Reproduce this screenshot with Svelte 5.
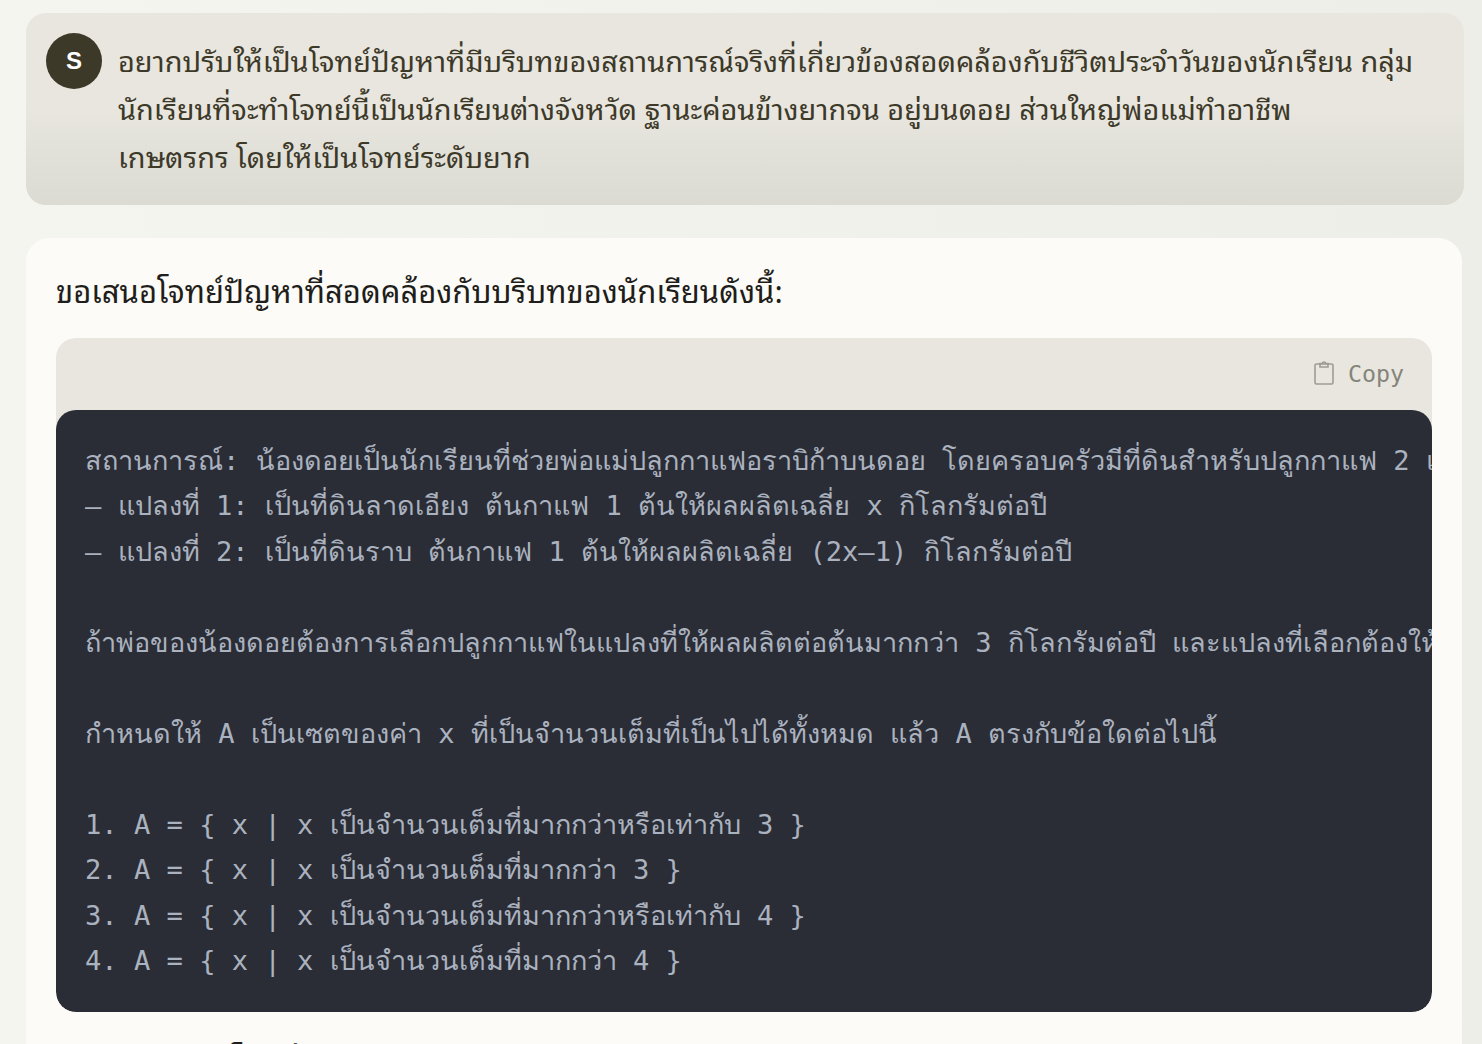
<script>
  const codeText = `สถานการณ์: น้องดอยเป็นนักเรียนที่ช่วยพ่อแม่ปลูกกาแฟอราบิก้าบนดอย โดยครอบครัวมีที่ดินสำหรับปลูกกาแฟ 2 แปลง ดังนี้
– แปลงที่ 1: เป็นที่ดินลาดเอียง ต้นกาแฟ 1 ต้นให้ผลผลิตเฉลี่ย x กิโลกรัมต่อปี
– แปลงที่ 2: เป็นที่ดินราบ ต้นกาแฟ 1 ต้นให้ผลผลิตเฉลี่ย (2x–1) กิโลกรัมต่อปี

ถ้าพ่อของน้องดอยต้องการเลือกปลูกกาแฟในแปลงที่ให้ผลผลิตต่อต้นมากกว่า 3 กิโลกรัมต่อปี และแปลงที่เลือกต้องให้ผลผลิตมากกว่าอีกแปลง

กำหนดให้ A เป็นเซตของค่า x ที่เป็นจำนวนเต็มที่เป็นไปได้ทั้งหมด แล้ว A ตรงกับข้อใดต่อไปนี้

1. A = { x | x เป็นจำนวนเต็มที่มากกว่าหรือเท่ากับ 3 }
2. A = { x | x เป็นจำนวนเต็มที่มากกว่า 3 }
3. A = { x | x เป็นจำนวนเต็มที่มากกว่าหรือเท่ากับ 4 }
4. A = { x | x เป็นจำนวนเต็มที่มากกว่า 4 }`;
</script>

<div class="page">
  <div class="user-msg">
    <div class="avatar">S</div>
    <p class="user-text">อยากปรับให้เป็นโจทย์ปัญหาที่มีบริบทของสถานการณ์จริงที่เกี่ยวข้องสอดคล้องกับชีวิตประจำวันของนักเรียน กลุ่ม<br />นักเรียนที่จะทำโจทย์นี้เป็นนักเรียนต่างจังหวัด ฐานะค่อนข้างยากจน อยู่บนดอย ส่วนใหญ่พ่อแม่ทำอาชีพ<br />เกษตรกร โดยให้เป็นโจทย์ระดับยาก</p>
  </div>

  <div class="reply">
    <p class="reply-text">ขอเสนอโจทย์ปัญหาที่สอดคล้องกับบริบทของนักเรียนดังนี้:</p>
    <div class="code-wrap">
      <div class="code-head">
        <button class="copy">
          <svg class="copy-icon" width="22" height="26" viewBox="0 0 22 26" fill="none" stroke="currentColor" stroke-width="1.6" aria-hidden="true">
            <rect x="2" y="4" width="18" height="20" rx="1.5" />
            <path d="M7 7V3.500h2.500a1.500 1.500 0 0 1 3 0H15V7z" />
          </svg>
          Copy
        </button>
      </div>
      <pre class="code"><code>{codeText}</code></pre>
    </div>
    <p class="reply-text next">คำอธิบายของโจทย์:</p>
  </div>
</div>

<style>
  :global(body) {
    margin: 0;
    background: #f3f3ed;
    overflow: hidden;
  }

  .page {
    height: 1044px;
    overflow: hidden;
    padding: 13px 18px 0 26px;
    box-sizing: border-box;
    background: linear-gradient(to right, #f5f5ef, #eeeee8);
    font-family: "Noto Sans Thai Looped", "Noto Sans", sans-serif;
  }

  .user-msg {
    display: flex;
    gap: 16px;
    height: 192px;
    box-sizing: border-box;
    padding: 20px 20px 0;
    border-radius: 20px;
    background: linear-gradient(to bottom, #e8e6de 0%, #e8e6de 50%, #dbdbd3 100%);
    color: #3d3929;
  }

  .avatar {
    flex: none;
    width: 56px;
    height: 56px;
    border-radius: 50%;
    background: #3d3929;
    color: #fff;
    font-family: "Liberation Sans", sans-serif;
    font-size: 24px;
    font-weight: 700;
    display: flex;
    align-items: center;
    justify-content: center;
  }

  .user-text {
    margin: 0;
    font-size: 28.9px;
    line-height: 48px;
    padding-top: 2px;
    white-space: nowrap;
  }

  .reply {
    margin-top: 33px;
    margin-right: 2px;
    padding: 27px 30px 0;
    border-radius: 24px 24px 0 0;
    background: #fcfbf8;
    color: #1f1e1a;
    min-height: 900px;
  }

  .reply-text {
    margin: 0 0 25px;
    font-size: 31px;
    line-height: 48px;
  }

  .code-wrap {
    border-radius: 20px;
    background: #e8e6de;
    overflow: hidden;
  }

  .code-head {
    height: 72px;
    display: flex;
    align-items: center;
    justify-content: flex-end;
    padding: 0 28px 2px 0;
    box-sizing: border-box;
  }

  .copy {
    display: flex;
    align-items: center;
    gap: 13px;
    border: 0;
    padding: 0;
    background: none;
    color: #85847b;
    font-family: "DejaVu Sans Mono", monospace;
    font-size: 23.3px;
  }

  .copy-icon {
    color: #9d9c93;
  }

  .code {
    margin: 0;
    height: 602px;
    box-sizing: border-box;
    padding: 28px 29px;
    border-radius: 20px;
    background: #2a2d36;
    color: #abb2bf;
    font-family: "DejaVu Sans Mono", monospace;
    font-size: 27.1px;
    line-height: 45.45px;
    overflow: hidden;
    white-space: pre;
  }

  .code code {
    font: inherit;
  }

  .next {
    margin-top: 21px;
    font-weight: 500;
  }
</style>
